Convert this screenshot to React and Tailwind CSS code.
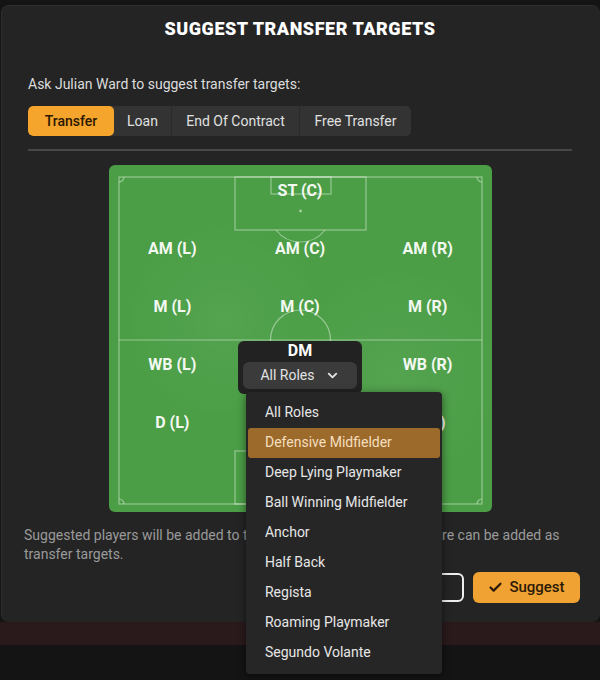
import { Check, ChevronDown } from "lucide-react";

const rows = [
  ["", "ST (C)", ""],
  ["AM (L)", "AM (C)", "AM (R)"],
  ["M (L)", "M (C)", "M (R)"],
  ["WB (L)", null, "WB (R)"],
  ["D (L)", "D (C)", "D (R)"],
];

const roles = [
  "All Roles",
  "Defensive Midfielder",
  "Deep Lying Playmaker",
  "Ball Winning Midfielder",
  "Anchor",
  "Half Back",
  "Regista",
  "Roaming Playmaker",
  "Segundo Volante",
];

const tabs = [
  { label: "Transfer", w: "w-[86px]" },
  { label: "Loan", w: "w-[57px]" },
  { label: "End Of Contract", w: "w-[128px]" },
  { label: "Free Transfer", w: "w-[112px]" },
];

const PitchLines = () => (
  <svg
    className="absolute inset-0"
    width="383"
    height="347"
    viewBox="0 0 383 347"
    fill="none"
    stroke="rgba(255,255,255,0.42)"
    strokeWidth="1.2"
  >
    <rect x="10" y="12" width="363" height="327" />
    <rect x="126" y="12" width="131" height="53" />
    <rect x="162" y="12" width="60" height="17" />
    <path d="M167 65 A31 31 0 0 0 216 65" />
    <circle cx="191.5" cy="46" r="0.8" fill="rgba(255,255,255,0.5)" />
    <line x1="10" y1="175" x2="373" y2="175" />
    <circle cx="191.5" cy="175" r="30" />
    <rect x="126" y="286" width="131" height="53" />
    <rect x="162" y="322" width="60" height="17" />
    <path d="M167 286 A31 31 0 0 1 216 286" />
    <path d="M10 17 A5 5 0 0 0 15 12" />
    <path d="M368 12 A5 5 0 0 0 373 17" />
    <path d="M10 334 A5 5 0 0 1 15 339" />
    <path d="M368 339 A5 5 0 0 1 373 334" />
  </svg>
);

const DmSlot = () => (
  <div className="relative z-20 mx-auto -mt-[10px] -mb-[15px] flex h-[53px] w-[124px] flex-col items-center rounded-md bg-[#222222]">
    <p className="text-[16px] font-bold leading-[20px] text-white">DM</p>
    <button
      type="button"
      className="mt-px flex h-[27px] w-[114px] items-center justify-center gap-[10px] rounded-md bg-[#3b3b3b] text-[14px] text-[#e2e2e2]"
    >
      All Roles
      <ChevronDown size={15} strokeWidth={3} />
    </button>
    <div className="absolute left-[8px] top-[51px] w-[196px] rounded-[4px] bg-[#262626] px-[2px] py-[6px] shadow-[0_2px_8px_rgba(0,0,0,0.5)]">
      {roles.map((role) => (
        <div
          key={role}
          className={`flex h-[30px] items-center rounded-[3px] pl-[17px] text-[14px] ${
            role === "Defensive Midfielder" ? "bg-[#9c6a2b] text-[#f5dfbf]" : "text-[#e6e6e6]"
          }`}
        >
          {role}
        </div>
      ))}
    </div>
  </div>
);

const App = () => {
  return (
    <div className="relative h-[680px] w-[600px] overflow-hidden bg-[#141414] pt-[5px] font-['Roboto','Liberation_Sans',sans-serif]">
      <div className="ml-[1px] rounded-lg border-l border-t border-[#2e2e2e] bg-[#242424] pb-[19px] pl-[26px] pr-[28px] pt-[12px]">
        <h2 className="text-center text-[18px] font-black uppercase leading-[22px] tracking-[0.03em] text-white">
          Suggest Transfer Targets
        </h2>
        <p className="mt-[34px] text-[14px] leading-[20px] text-[#dcdcdc]">
          Ask Julian Ward to suggest transfer targets:
        </p>
        <div className="mt-[12px] flex h-[30px] w-fit overflow-hidden rounded-[5px] bg-[#333333]">
          {tabs.map((tab, i) => (
            <button
              key={tab.label}
              type="button"
              className={`${tab.w} flex items-center justify-center text-[14px] ${
                i === 0
                  ? "rounded-[5px] bg-[#f5a42c] font-medium text-[#2b1800]"
                  : "border-l border-[#2a2a2a] text-[#e0e0e0]"
              } ${i === 1 ? "border-l-0" : ""}`}
            >
              {tab.label}
            </button>
          ))}
        </div>
        <div className="mt-[13px] h-[1.5px] bg-[#474747]" />

        <div className="relative mx-auto mt-[14px] h-[347px] w-[383px] rounded-md bg-[#4b9e46] bg-[radial-gradient(circle_at_30%_45%,rgba(255,255,255,0.05),transparent_30%),radial-gradient(circle_at_75%_60%,rgba(255,255,255,0.05),transparent_30%)] pt-[12px]">
          <PitchLines />
          <div className="relative flex flex-col gap-[30px]">
            {rows.map((row, r) => (
              <div key={r} className="grid h-[28px] grid-cols-3 items-center">
                {row.map((label, c) =>
                  label === null ? (
                    <DmSlot key={c} />
                  ) : (
                    <p key={c} className="text-center text-[16px] font-bold text-[#f4f8f2]">
                      {label}
                    </p>
                  )
                )}
              </div>
            ))}
          </div>
        </div>

        <p className="-ml-[4px] mt-[14px] text-[14px] leading-[19px] text-[#9a9a9a]">
          Suggested players will be added to the shortlist. Players already there can be added as
          <br />
          transfer targets.
        </p>
        <div className="-mr-[8px] mt-[8px] flex justify-end gap-[9px]">
          <button
            type="button"
            className="mt-px h-[29px] w-[86px] rounded-md border-2 border-[#eeeeee] text-[14px] text-white"
          >
            Cancel
          </button>
          <button
            type="button"
            className="flex h-[31px] w-[107px] items-center justify-center gap-[6px] rounded-md bg-[#f0a232] text-[15px] font-medium text-[#2b1a08]"
          >
            <Check size={15} strokeWidth={3.5} />
            Suggest
          </button>
        </div>
      </div>
      <div className="h-[23px] bg-[#2a1a1c]" />
    </div>
  );
};

export default App;
